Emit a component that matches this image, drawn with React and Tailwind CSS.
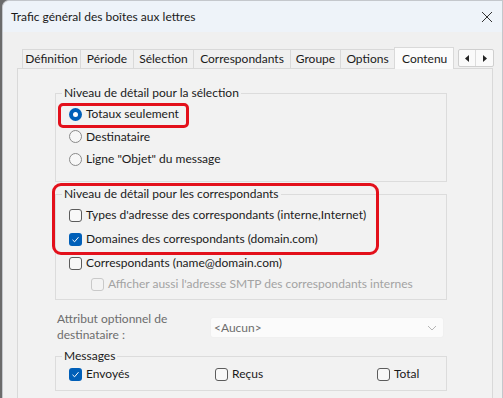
import React from 'react';

const font = { fontFamily: 'Lato, "Noto Sans", "Liberation Sans", sans-serif' };

const tabs = [
  { label: 'Définition', w: 'w-[58px]' },
  { label: 'Période', w: 'w-[53px]' },
  { label: 'Sélection', w: 'w-[60px]' },
  { label: 'Correspondants', w: 'w-[97px]' },
  { label: 'Groupe', w: 'w-[50px]' },
  { label: 'Options', w: 'w-[54px]' },
];

const Radio = ({ checked, label }) => (
  <div className="flex items-center gap-[4px]">
    {checked ? (
      <span className="w-[13px] h-[13px] rounded-full bg-[#005fb8] flex items-center justify-center">
        <span className="w-[5px] h-[5px] rounded-full bg-white" />
      </span>
    ) : (
      <span className="w-[13px] h-[13px] rounded-full border border-[#8a8a8a] bg-[#f7f7f7]" />
    )}
    <span>{label}</span>
  </div>
);

const Check = ({ checked, label, disabled }) => (
  <div className={`flex items-center gap-[4px] ${disabled ? 'text-[#a3a3a3]' : ''}`}>
    {checked ? (
      <span className="w-[13px] h-[13px] rounded-[3px] bg-[#005fb8] flex items-center justify-center">
        <svg width="9" height="9" viewBox="0 0 9 9">
          <path d="M1.5 4.8 L3.6 6.8 L7.5 2.2" fill="none" stroke="white" strokeWidth="1" />
        </svg>
      </span>
    ) : (
      <span
        className={`w-[13px] h-[13px] rounded-[3px] border ${
          disabled ? 'border-[#c9c9c9] bg-[#f3f3f3]' : 'border-[#5c5c5c] bg-[#f8f8f8]'
        }`}
      />
    )}
    <span>{label}</span>
  </div>
);

export default function App() {
  return (
    <div
      className="w-[503px] h-[398px] overflow-hidden bg-[#6b6b6b] text-[12px] text-[#1a1a1a] leading-[16px]"
      style={font}
    >
      <div className="ml-[2px] w-[501px] h-[398px] rounded-tl-[7px] border-l border-t border-r border-[#c4c7cc] bg-[#f0f0f0] flex flex-col">
        {/* Title bar */}
        <div className="h-[31px] shrink-0 bg-[#eef3f9] rounded-tl-[7px] flex items-center justify-between pl-[8px] pr-[8px]">
          <span className="text-[#1a1a1a]">Trafic général des boîtes aux lettres</span>
          <svg width="12" height="12" viewBox="0 0 12 12" className="mr-[1px]">
            <path d="M1 1 L11 11 M11 1 L1 11" stroke="#333" strokeWidth="1" />
          </svg>
        </div>

        {/* Body */}
        <div className="flex-1 pl-[14px] pr-[8px] pt-[14px]">
          {/* Tab strip */}
          <div className="flex items-end h-[22px] pl-[5px]">
            {tabs.map((t) => (
              <div
                key={t.label}
                className={`${t.w} h-[19px] flex items-center justify-center border-t border-l border-[#d9d9d9] bg-[#f0f0f0]`}
              >
                {t.label}
              </div>
            ))}
            <div className="w-[60px] h-[22px] flex items-center pl-[7px] border-t border-l border-r border-[#d9d9d9] bg-[#fbfbfb] relative z-10 -mb-px">
              Contenu
            </div>
            <div className="ml-[4px] mb-[1px] self-start mt-[3px] flex h-[18px] border border-[#cfcfcf] rounded-[2px] bg-[#fafafa]">
              <div className="w-[17px] flex items-center justify-center border-r border-[#dcdcdc]">
                <svg width="5" height="7" viewBox="0 0 5 7"><path d="M4 0 L0 3.5 L4 7 Z" fill="#222" /></svg>
              </div>
              <div className="w-[17px] flex items-center justify-center">
                <svg width="5" height="7" viewBox="0 0 5 7"><path d="M1 0 L5 3.5 L1 7 Z" fill="#222" /></svg>
              </div>
            </div>
          </div>

          {/* Panel */}
          <div className="relative w-[476px] h-[340px] border border-[#d9d9d9] bg-[#f2f2f2] pl-[37px] pt-[16px]">
            <div className="w-[392px]">
              <fieldset className="border border-[#dcdcdc] pl-[6px] pb-[9px] h-[97px]">
                <legend className="px-[2px] leading-[16px]">Niveau de détail pour la sélection</legend>
                <div className="pl-[7px] pt-[2px]">
                  <div className="h-[22px] flex items-center"><Radio checked label="Totaux seulement" /></div>
                  <div className="h-[23px] flex items-center"><Radio label="Destinataire" /></div>
                  <div className="h-[22px] flex items-center"><Radio label={'Ligne "Objet" du message'} /></div>
                </div>
              </fieldset>

              <fieldset className="mt-[4px] border border-[#dcdcdc] pl-[6px] h-[114px]">
                <legend className="px-[2px] leading-[16px]">Niveau de détail pour les correspondants</legend>
                <div className="pl-[7px] pt-[1px]">
                  <div className="h-[24px] flex items-center"><Check label="Types d'adresse des correspondants (interne,Internet)" /></div>
                  <div className="h-[24px] flex items-center"><Check checked label="Domaines des correspondants (domain.com)" /></div>
                  <div className="h-[24px] flex items-center"><Check label="Correspondants (name@domain.com)" /></div>
                  <div className="h-[18px] flex items-center pl-[22px]">
                    <Check disabled label="Afficher aussi l'adresse SMTP des correspondants internes" />
                  </div>
                </div>
              </fieldset>

              <div className="mt-[11px] flex items-start">
                <div className="w-[155px] pl-[2px] text-[#6d6d6d]">
                  Attribut optionnel de<br />destinataire :
                </div>
                <div className="mt-[6px] w-[234px] h-[21px] rounded-[3px] bg-[#fbfbfb] border border-[#f0f0f0] flex items-center justify-between pl-[3px] pr-[6px] text-[#6d6d6d]">
                  <span>&lt;Aucun&gt;</span>
                  <svg width="10" height="6" viewBox="0 0 10 6">
                    <path d="M1 1 L5 5 L9 1" fill="none" stroke="#b5b5b5" strokeWidth="1" />
                  </svg>
                </div>
              </div>

              <fieldset className="mt-[5px] border border-[#dcdcdc] pl-[6px] h-[43px]">
                <legend className="px-[2px] leading-[16px]">Messages</legend>
                <div className="pl-[7px] h-[20px] flex items-center">
                  <div className="w-[146px]"><Check checked label="Envoyés" /></div>
                  <div className="w-[162px]"><Check label="Reçus" /></div>
                  <Check label="Total" />
                </div>
              </fieldset>
            </div>

            {/* red annotation highlights */}
            <div className="absolute left-[40px] top-[34px] w-[131px] h-[25px] border-[3px] border-[#e3101b] rounded-[5px] pointer-events-none" />
            <div className="absolute left-[34px] top-[114px] w-[327px] h-[72px] border-[3px] border-[#e3101b] rounded-[9px] pointer-events-none" />
          </div>
        </div>
      </div>
    </div>
  );
}
